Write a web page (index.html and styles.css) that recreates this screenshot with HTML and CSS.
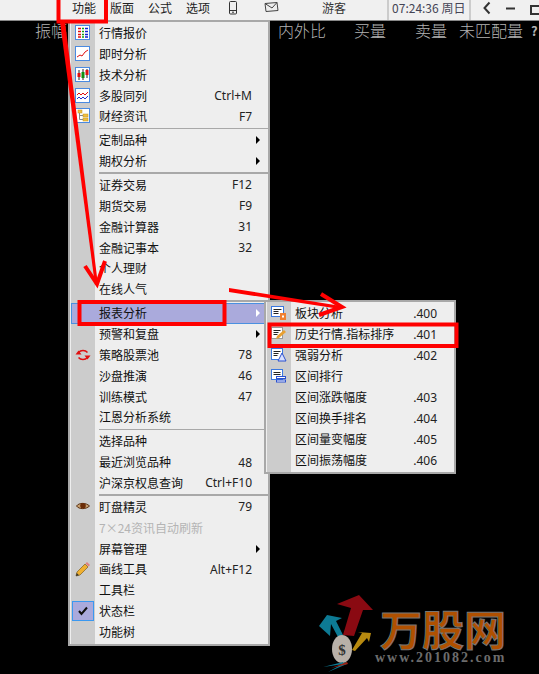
FILE: index.html
```html
<!DOCTYPE html>
<html>
<head>
    <meta charset="UTF-8">
    <title>功能菜单</title>
    <link rel="stylesheet" href="styles.css">
</head>
<body>
    <div class="topbar">
        <span class="top-item">功能</span>
        <span class="top-item">版面</span>
        <span class="top-item">公式</span>
        <span class="top-item">选项</span>
        <svg class="top-phone" width="10" height="14" viewBox="0 0 10 14"><rect x="1.500" y="0.500" width="7" height="12.500" rx="1" fill="none" stroke="#333"/><path d="M2 9.500h6M4 11.200h2" stroke="#333"/></svg>
        <svg class="top-mail" width="15" height="11" viewBox="0 0 15 11"><path d="M1 1.500l12-1 1 8-12 1z" fill="#eee" stroke="#444"/><path d="M1 1.500l7 4.500 5-5.500" fill="none" stroke="#444"/></svg>
        <span class="top-user">游客</span>
        <span class="top-clock">07:24:36 周日</span>
        <div class="top-ctrl">
            <svg width="10" height="14" viewBox="0 0 10 14"><path d="M7.500 1.500L2.500 7l5 5.500" fill="none" stroke="#333" stroke-width="2"/></svg>
            <svg width="10" height="14" viewBox="0 0 10 14"><path d="M0 7.500h9" stroke="#333" stroke-width="2"/></svg>
            <svg width="10" height="14" viewBox="0 0 10 14"><path d="M1 5h9v8H1z" fill="none" stroke="#333" stroke-width="2"/></svg>
        </div>
    </div>

    <div class="columns">
        <span class="col col-zf">振幅</span>
        <span class="col col-nwb">内外比</span>
        <span class="col col-buy">买量</span>
        <span class="col col-sell">卖量</span>
        <span class="col col-wpp">未匹配量</span>
        <span class="col col-q">?</span>
    </div>

    <div class="menu main-menu">
        <div class="row"><span class="ico"><svg width="16" height="16" viewBox="0 0 16 16"><rect x="0.500" y="0.500" width="14" height="14" fill="#fff" stroke="#4a8ae0"/><path d="M3 3.500h3M3 6.500h3M3 9.500h3M3 12h3" stroke="#e01010" stroke-width="1.500"/><path d="M7 3.500h2M7 6.500h2M7 9.500h2M7 12h2" stroke="#10a010" stroke-width="1.500"/><path d="M10 3.500h3M10 6.500h3M10 9.500h3M10 12h3" stroke="#1020d0" stroke-width="1.500"/></svg></span><span class="label">行情报价</span></div>
        <div class="row"><span class="ico"><svg width="16" height="16" viewBox="0 0 16 16"><rect x="0.500" y="0.500" width="14" height="14" fill="#fff" stroke="#4a8ae0"/><path d="M2 11l3-2 2 1 3-4 3-2" fill="none" stroke="#e01010"/></svg></span><span class="label">即时分析</span></div>
        <div class="row"><span class="ico"><svg width="16" height="16" viewBox="0 0 16 16"><rect x="0.500" y="0.500" width="14" height="14" fill="#fff" stroke="#4a8ae0"/><path d="M4 3v10M8 2v11M12 2v9" stroke="#222"/><rect x="2.500" y="6" width="3" height="4" fill="#e01010"/><rect x="6.500" y="5" width="3" height="6" fill="#109010"/><rect x="10.500" y="3" width="3" height="5" fill="#e01010"/></svg></span><span class="label">技术分析</span></div>
        <div class="row"><span class="ico"><svg width="16" height="16" viewBox="0 0 16 16"><rect x="0.500" y="0.500" width="14" height="14" fill="#fff" stroke="#4a8ae0"/><path d="M2 7l2-2 2 2 2-2 2 2 3-3" fill="none" stroke="#e01010"/><path d="M2 11l2-2 2 2 2-2 2 2 3-3" fill="none" stroke="#2030d0"/></svg></span><span class="label">多股同列</span><span class="key">Ctrl+M</span></div>
        <div class="row"><span class="ico"><svg width="16" height="16" viewBox="0 0 16 16"><rect x="0.500" y="0.500" width="14" height="14" fill="#fff" stroke="#4a8ae0"/><rect x="3" y="2" width="4" height="3" fill="#f0c040" stroke="#c09020" stroke-width="0.500"/><rect x="8" y="6" width="5" height="3" fill="#f0c040" stroke="#c09020" stroke-width="0.500"/><rect x="8" y="10" width="5" height="3" fill="#f0c040" stroke="#c09020" stroke-width="0.500"/><path d="M4.500 5v6.500H8M4.500 7.500H8" fill="none" stroke="#888"/></svg></span><span class="label">财经资讯</span><span class="key">F7</span></div>
        <div class="sep"></div>
        <div class="row"><span class="ico"></span><span class="label">定制品种</span><span class="more"></span></div>
        <div class="row"><span class="ico"></span><span class="label">期权分析</span><span class="more"></span></div>
        <div class="sep"></div>
        <div class="row"><span class="ico"></span><span class="label">证券交易</span><span class="key">F12</span></div>
        <div class="row"><span class="ico"></span><span class="label">期货交易</span><span class="key">F9</span></div>
        <div class="row"><span class="ico"></span><span class="label">金融计算器</span><span class="key">31</span></div>
        <div class="row"><span class="ico"></span><span class="label">金融记事本</span><span class="key">32</span></div>
        <div class="row"><span class="ico"></span><span class="label">个人理财</span></div>
        <div class="row"><span class="ico"></span><span class="label">在线人气</span></div>
        <div class="sep"></div>
        <div class="row row-on"><span class="ico"></span><span class="label">报表分析</span><span class="more more-on"></span></div>
        <div class="row"><span class="ico"></span><span class="label">预警和复盘</span><span class="more"></span></div>
        <div class="row"><span class="ico"><svg width="16" height="16" viewBox="0 0 16 16"><path d="M3.500 5.500A5.500 4.500 0 0 1 12.500 5.500M12.500 10.500A5.500 4.500 0 0 1 3.500 10.500" fill="none" stroke="#e01010" stroke-width="1.500"/><path d="M0.500 7.500H6.500L3.500 3.500zM15.500 8.500H9.500L12.500 12.500z" fill="#e01010"/></svg></span><span class="label">策略股票池</span><span class="key">78</span></div>
        <div class="row"><span class="ico"></span><span class="label">沙盘推演</span><span class="key">46</span></div>
        <div class="row"><span class="ico"></span><span class="label">训练模式</span><span class="key">47</span></div>
        <div class="row"><span class="ico"></span><span class="label">江恩分析系统</span></div>
        <div class="sep"></div>
        <div class="row"><span class="ico"></span><span class="label">选择品种</span></div>
        <div class="row"><span class="ico"></span><span class="label">最近浏览品种</span><span class="key">48</span></div>
        <div class="row"><span class="ico"></span><span class="label">沪深京权息查询</span><span class="key">Ctrl+F10</span></div>
        <div class="sep"></div>
        <div class="row"><span class="ico"><svg width="16" height="16" viewBox="0 0 16 16"><path d="M1.500 7C4 3.500 11 3.500 14.500 7 11 10.500 4 10.500 1.500 7z" fill="#c8a070" stroke="#5a3010"/><circle cx="8" cy="6.800" r="2.800" fill="#6a2c08"/></svg></span><span class="label">盯盘精灵</span><span class="key">79</span></div>
        <div class="row row-off"><span class="ico"></span><span class="label">7×24资讯自动刷新</span></div>
        <div class="row"><span class="ico"></span><span class="label">屏幕管理</span><span class="more"></span></div>
        <div class="row"><span class="ico"><svg width="16" height="16" viewBox="0 0 16 16"><path d="M1 15l1-4 8-8 3 3-8 8z" fill="#f0b030" stroke="#806020" stroke-width="0.700"/><path d="M10.500 2.500l1.500-1.500 3 3-1.500 1.500z" fill="#e08080"/><path d="M1 15l.7-3 2.300 2.300z" fill="#333"/></svg></span><span class="label">画线工具</span><span class="key">Alt+F12</span></div>
        <div class="row"><span class="ico"></span><span class="label">工具栏</span></div>
        <div class="row"><span class="ico ico-check"><svg width="12" height="10" viewBox="0 0 12 10"><path d="M2 5l2.500 3L10 1.500" fill="none" stroke="#111" stroke-width="2"/></svg></span><span class="label">状态栏</span></div>
        <div class="row"><span class="ico"></span><span class="label">功能树</span></div>
    </div>

    <div class="menu sub-menu">
        <div class="row"><span class="ico"><svg width="16" height="16" viewBox="0 0 16 16"><rect x="0.500" y="1.500" width="12" height="10" fill="#fff" stroke="#3a78e0"/><path d="M2.500 4.500h8M2.500 6.500h5M2.500 8.500h5" stroke="#222"/><rect x="9" y="8" width="6" height="7" fill="#f08030"/><rect x="11" y="10.500" width="2" height="2" fill="#fff"/></svg></span><span class="label">板块分析</span><span class="key">.400</span></div>
        <div class="row"><span class="ico"><svg width="16" height="16" viewBox="0 0 16 16"><rect x="0.500" y="1.500" width="11" height="11" fill="#fff" stroke="#999"/><path d="M2.500 4.500h7M2.500 6.500h5M2.500 8.500h4" stroke="#222"/><path d="M5 13l1-3 7-6 2 2-7 6z" fill="#e8a030"/></svg></span><span class="label">历史行情.指标排序</span><span class="key">.401</span></div>
        <div class="row"><span class="ico"><svg width="16" height="16" viewBox="0 0 16 16"><rect x="0.500" y="1.500" width="11" height="11" fill="#fff" stroke="#3a78e0"/><path d="M2.500 4.500h7M2.500 6.500h5M2.500 8.500h4" stroke="#222"/><path d="M11 6l4 8H7z" fill="#d8e0ff" stroke="#2a50d0"/></svg></span><span class="label">强弱分析</span><span class="key">.402</span></div>
        <div class="row"><span class="ico"><svg width="16" height="16" viewBox="0 0 16 16"><rect x="0.500" y="1.500" width="11" height="10" fill="#fff" stroke="#3a78e0"/><path d="M2.500 4.500h7M2.500 6.500h7" stroke="#222"/><rect x="5.500" y="8.500" width="9" height="2" fill="#fff" stroke="#2a50d0"/><rect x="5.500" y="12" width="9" height="2" fill="#fff" stroke="#2a50d0"/></svg></span><span class="label">区间排行</span></div>
        <div class="row"><span class="ico"></span><span class="label">区间涨跌幅度</span><span class="key">.403</span></div>
        <div class="row"><span class="ico"></span><span class="label">区间换手排名</span><span class="key">.404</span></div>
        <div class="row"><span class="ico"></span><span class="label">区间量变幅度</span><span class="key">.405</span></div>
        <div class="row"><span class="ico"></span><span class="label">区间振荡幅度</span><span class="key">.406</span></div>
    </div>

    <!-- red marks drawn over the screenshot -->
    <svg class="marks" width="539" height="674" viewBox="0 0 539 674">
        <g fill="none" stroke="#f00" stroke-width="4">
            <rect x="58.500" y="-4" width="47.500" height="25.500"/>
            <rect x="79.500" y="302" width="145" height="22"/>
            <rect x="269.500" y="324.500" width="187" height="21.500"/>
            <path d="M85 266l12 18 8-23M321 294l21 13-23 8"/>
        </g>
        <path d="M60 22h5l33 263h-3z" fill="#f00"/>
        <path d="M229 288l112 18-1 3-111-17z" fill="#f00"/>
    </svg>

    <div class="logo">
        <svg width="70" height="89" viewBox="310 585 70 89">
            <path d="M359 595l14 15-10 0-9 26-11-1 8-27-14-4z" fill="#8a0a12"/>
            <path d="M319 626l8-11 15 3-6 3 7 14-5 2-7-13-1 12z" fill="#0d7a94"/>
            <path d="M352 650l10-17-4-1 13 1-2 9-2-4-12 13z" fill="#b88a10"/>
            <ellipse cx="342" cy="649" rx="10" ry="14" fill="#b8b0a8"/>
            <path d="M323 667l20-5 1 2zM328 672l18-10 1 2z" fill="#0d7a94"/>
            <path d="M331 668l16-6 1 2z" fill="#a02010"/>
            <text x="342" y="655" class="logo-coin" text-anchor="middle">$</text>
        </svg>
        <div class="logo-text">
            <div class="logo-name">万股网</div>
            <div class="logo-url">www.201082.com</div>
        </div>
    </div>
</body>
</html>
```

FILE: styles.css
```css
html,
body {
    height: 100%;
    margin: 0;
    padding: 0;
}

body {
    background: #000;
    overflow: hidden;
    position: relative;
    font-family: "Noto Sans CJK SC", "Liberation Sans", sans-serif;
}

/* top bar */
.topbar {
    display: flex;
    align-items: flex-start;
    height: 20px;
    padding-left: 72px;
    background: #f0f0f0;
    border-bottom: 1px solid #888;
    font-size: 12px;
    color: #222;
    white-space: nowrap;
    overflow: hidden;
}

.topbar > * {
    flex: none;
}

.top-item {
    margin-right: 14px;
    line-height: 15px;
}

.top-phone {
    margin-left: 4px;
    margin-top: 1px;
}

.top-mail {
    margin-left: 26px;
    margin-top: 2px;
}

.top-user {
    margin-left: 43px;
    width: 41px;
    padding-right: 24px;
    line-height: 15px;
    color: #333;
}

.top-clock {
    width: 77px;
    height: 20px;
    padding-left: 3px;
    line-height: 15px;
    border-left: 2px solid #ccc;
    border-right: 2px solid #ccc;
    color: #445;
}

.top-ctrl {
    display: flex;
    gap: 14px;
    margin-left: 11px;
    margin-top: 1px;
}

/* quote columns */
.columns {
    display: flex;
    height: 18px;
    align-items: center;
    color: #b4b4b4;
    font-size: 16px;
    font-weight: 300;
}

.col {
    white-space: nowrap;
}

.col-zf {
    margin-left: 35px;
}

.col-nwb {
    margin-left: 211px;
}

.col-buy {
    margin-left: 28px;
}

.col-sell {
    margin-left: 29px;
}

.col-wpp {
    margin-left: 12px;
}

.col-q {
    margin-left: 8px;
    font-size: 13px;
    font-weight: 700;
}

/* menus */
.menu {
    position: absolute;
    box-sizing: border-box;
    border: 2px solid #a8a8a8;
    padding-left: 1px;
    background: #eee linear-gradient(#ccc, #ccc) no-repeat 1px 0 / 24px 100%;
    font-size: 12px;
    color: #111;
}

.main-menu {
    left: 68px;
    top: 20px;
    width: 202px;
    height: 626px;
    padding-top: 0.500px;
}

.sub-menu {
    left: 264px;
    top: 300px;
    width: 192px;
    height: 174px;
    padding-top: 0.500px;
}

.row {
    display: flex;
    align-items: center;
    height: 20.870px;
    box-sizing: border-box;
    position: relative;
}

.sub-menu .row {
    height: 21px;
}

.ico {
    display: flex;
    align-items: center;
    justify-content: center;
    width: 22px;
    height: 20px;
    margin-left: 1px;
    margin-right: 5px;
    flex: none;
}

.label {
    flex: 1;
    white-space: nowrap;
    line-height: 16px;
}

.key {
    margin-right: 16px;
    white-space: nowrap;
    color: #222;
    font-family: "Noto Sans", sans-serif;
}

.sub-menu .key {
    margin-right: 17px;
}

.more {
    width: 0;
    height: 0;
    margin-right: 8px;
    border-left: 4px solid #000;
    border-top: 4px solid transparent;
    border-bottom: 4px solid transparent;
}

.more-on {
    border-left-color: #fff;
}

.sep {
    height: 1.500px;
    margin: 0.750px 0 0.750px 28px;
    background: #a8a8a8;
}

.row-on {
    background: #aaaadc;
    box-shadow: inset 0 0 0 1px #4a90e0;
}

.row-off {
    color: #b4b4b4;
}

.ico-check {
    background: #aaaadc;
    box-shadow: inset 0 0 0 1px #3a98f0;
}

/* annotations */
.marks {
    position: absolute;
    left: 0;
    top: 0;
    pointer-events: none;
}

/* watermark logo */
.logo {
    position: absolute;
    left: 310px;
    top: 585px;
    display: flex;
}

.logo-coin {
    font-size: 15px;
    font-weight: 700;
    fill: #333;
    font-family: "Liberation Serif", serif;
}

.logo-text {
    width: 145px;
    margin-left: -5px;
}

.logo-name {
    margin-top: 20px;
    margin-left: 5px;
    height: 46px;
    font-size: 42px;
    line-height: 46px;
    font-weight: 700;
    color: #b05000;
    -webkit-text-stroke: 1px #777;
    white-space: nowrap;
}

.logo-url {
    font-family: "Liberation Serif", serif;
    font-size: 14px;
    line-height: 14px;
    font-weight: 700;
    letter-spacing: 2px;
    color: #6c6c6c;
    white-space: nowrap;
}
```
